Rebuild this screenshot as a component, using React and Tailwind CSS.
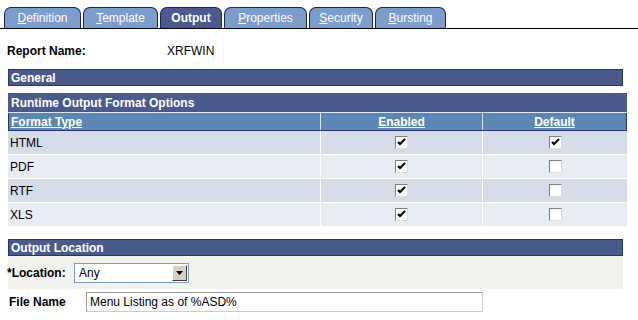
import React from "react";

function Tab({ label, w, active }) {
  const rest = label.slice(1);
  return (
    <div
      className={`h-[21px] ${w} rounded-t-[7px] border border-b-0 border-[#1c2544] flex items-center justify-center text-[12px] text-white ${
        active ? "bg-[#4a5a8c] font-bold" : "bg-[#7b9dcc]"
      }`}
    >
      {active ? (
        label
      ) : (
        <span>
          <span className="underline">{label[0]}</span>
          {rest}
        </span>
      )}
    </div>
  );
}

function Check({ on }) {
  return (
    <div className="w-[13px] h-[13px] border-t border-l border-[#808080] border-r border-b border-r-[#e0ddd6] border-b-[#e0ddd6] bg-white flex items-center justify-center">
      {on && (
        <svg width="9" height="9" viewBox="0 0 9 9">
          <path d="M1 4 L3 6 L8 1" stroke="#000" strokeWidth="2" fill="none" />
        </svg>
      )}
    </div>
  );
}

const rows = [
  ["HTML", true, true],
  ["PDF", true, false],
  ["RTF", true, false],
  ["XLS", true, false],
];

export default function App() {
  return (
    <div
      className="w-[638px] h-[320px] bg-white text-[12px] text-black overflow-hidden"
      style={{ fontFamily: '"Liberation Sans", Arial, sans-serif' }}
    >
      {/* tabs */}
      <div className="pt-[7px] pl-[4px] border-b border-black flex gap-[2px] h-[29px] items-end">
        <Tab label="Definition" w="w-[77px]" />
        <Tab label="Template" w="w-[75px]" />
        <Tab label="Output" w="w-[62px]" active />
        <Tab label="Properties" w="w-[83px]" />
        <Tab label="Security" w="w-[64px]" />
        <Tab label="Bursting" w="w-[71px]" />
      </div>

      {/* report name */}
      <div className="flex items-center h-[24px] mt-[10px] pl-[7px]">
        <span className="font-bold w-[160px]">Report Name:</span>
        <span>XRFWIN</span>
      </div>

      {/* General */}
      <div className="ml-[8px] mt-[6px] w-[615px] h-[17px] bg-[#4a5a8c] border border-[#26356a] text-white font-bold flex items-center pl-[2px]">
        General
      </div>

      {/* Runtime grid */}
      <div className="ml-[8px] mt-[7px] w-[619px]">
        <div className="h-[19px] bg-[#4a5a8c] text-white font-bold flex items-center pl-[3px]">
          Runtime Output Format Options
        </div>
        <div className="flex h-[19px] bg-[#5a87b5] border-t border-t-[#dfe6ef] border-b border-b-[#26356a] text-white font-bold">
          <div className="w-[312px] border-l border-[#26356a] flex items-center pl-[2px]">
            <span className="underline">Format Type</span>
          </div>
          <div className="w-[162px] border-l border-[#dfe6ef] flex items-center justify-center">
            <span className="underline">Enabled</span>
          </div>
          <div className="flex-1 border-l border-[#dfe6ef] border-r border-r-[#26356a] flex items-center justify-center">
            <span className="underline">Default</span>
          </div>
        </div>
        {rows.map(([name, en, def], i) => (
          <div
            key={name}
            className={`flex h-[24px] border-b border-white ${i % 2 === 0 ? "bg-[#d5dce8]" : "bg-[#e7ebf4]"}`}
          >
            <div className="w-[312px] flex items-center pl-[2px]">{name}</div>
            <div className="w-[162px] border-l border-white flex items-center justify-center">
              <Check on={en} />
            </div>
            <div className="flex-1 border-l border-white flex items-center justify-center">
              <Check on={def} />
            </div>
          </div>
        ))}
      </div>

      {/* Output Location */}
      <div className="ml-[8px] mt-[12px] w-[615px]">
        <div className="h-[17px] bg-[#4a5a8c] border border-[#26356a] text-white font-bold flex items-center pl-[2px]">
          Output Location
        </div>
        <div className="h-[33px] bg-[#f1f2ee] flex items-center">
          <span className="font-bold w-[67px] -ml-[1px]">*Location:</span>
          <div className="w-[115px] h-[20px] border border-[#7f9db9] bg-white flex items-center">
            <span className="flex-1 pl-[4px]">Any</span>
            <div className="w-[15px] h-[16px] mr-[1px] bg-[#d4d0c8] border border-t-white border-l-white border-r-[#404040] border-b-[#404040] flex items-center justify-center">
              <svg width="7" height="4" viewBox="0 0 7 4">
                <path d="M0 0 H7 L3.5 4 Z" fill="#000" />
              </svg>
            </div>
          </div>
        </div>
      </div>
      <div className="flex items-center mt-[3px] pl-[9px]">
        <span className="font-bold w-[77px]">File Name</span>
        <div className="w-[397px] h-[20px] border border-[#999] border-r-[#ccc] border-b-[#ccc] bg-white flex items-center pl-[3px]">
          Menu Listing as of %ASD%
        </div>
      </div>
    </div>
  );
}
